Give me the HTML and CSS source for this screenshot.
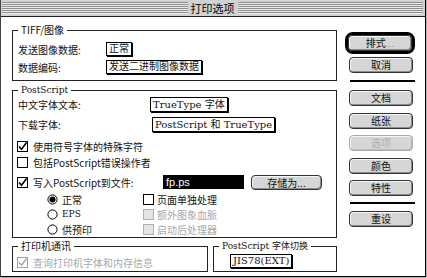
FILE: index.html
```html
<!DOCTYPE html>
<html lang="zh-CN">
<head>
<meta charset="utf-8">
<title>打印选项</title>
<link rel="stylesheet" href="styles.css">
</head>
<body>
<div class="dialog">
  <div class="titlebar"><div class="stripes"><span class="title">打印选项</span></div></div>
  <div class="body">
    <div class="left">
      <fieldset class="group tiff">
        <legend>TIFF/图像</legend>
        <div class="row r1"><span class="lbl w88">发送图像数据:</span><span class="popup">正常</span></div>
        <div class="row r2"><span class="lbl w88">数据编码:</span><span class="popup">发送二进制图像数据</span></div>
      </fieldset>
      <fieldset class="group ps">
        <legend class="serif">PostScript</legend>
        <div class="row ra"><span class="lbl w132">中文字体文本:</span><span class="popup tall">TrueType 字体</span></div>
        <div class="row rb"><span class="lbl w134">下载字体:</span><span class="popup tall">PostScript 和 TrueType</span></div>
        <div class="row check c1">
          <svg class="box" width="11" height="11" viewBox="0 0 11 11"><rect x="0.5" y="0.5" width="10" height="10" fill="#fff" stroke="#000"/><path d="M2 5.5 L4.5 8.2 L9.6 1.6" fill="none" stroke="#000" stroke-width="1.6"/></svg>
          <span>使用符号字体的特殊字符</span>
        </div>
        <div class="row check c2">
          <svg class="box" width="11" height="11" viewBox="0 0 11 11"><rect x="0.5" y="0.5" width="10" height="10" fill="#fff" stroke="#000"/></svg>
          <span>包括PostScript错误操作者</span>
        </div>
        <div class="row check c3">
          <svg class="box" width="11" height="11" viewBox="0 0 11 11"><rect x="0.5" y="0.5" width="10" height="10" fill="#fff" stroke="#000"/><path d="M2 5.5 L4.5 8.2 L9.6 1.6" fill="none" stroke="#000" stroke-width="1.6"/></svg>
          <span class="lbl w125">写入PostScript到文件:</span>
          <span class="field">fp.ps</span>
          <span class="btn save">存储为...</span>
        </div>
        <div class="opts">
          <div class="opt">
            <svg width="11" height="11" viewBox="0 0 11 11"><circle cx="5.5" cy="5.5" r="4.6" fill="#fff" stroke="#000"/><circle cx="5.5" cy="5.5" r="3" fill="#000"/></svg>
            <span>正常</span>
          </div>
          <div class="opt o2">
            <svg width="11" height="11" viewBox="0 0 11 11"><rect x="0.5" y="0.5" width="10" height="10" fill="#fff" stroke="#000"/></svg>
            <span>页面单独处理</span>
          </div>
          <div class="opt">
            <svg width="11" height="11" viewBox="0 0 11 11"><circle cx="5.5" cy="5.5" r="4.6" fill="#fff" stroke="#000"/></svg>
            <span class="serif">EPS</span>
          </div>
          <div class="opt o2 off">
            <svg width="11" height="11" viewBox="0 0 11 11"><rect x="0.5" y="0.5" width="10" height="10" fill="#e4e4e4" stroke="#b0b0b0"/></svg>
            <span>额外图象血脈</span>
          </div>
          <div class="opt">
            <svg width="11" height="11" viewBox="0 0 11 11"><circle cx="5.5" cy="5.5" r="4.6" fill="#fff" stroke="#000"/></svg>
            <span>供预印</span>
          </div>
          <div class="opt o2 off">
            <svg width="11" height="11" viewBox="0 0 11 11"><rect x="0.5" y="0.5" width="10" height="10" fill="#e4e4e4" stroke="#b0b0b0"/></svg>
            <span>启动后处理器</span>
          </div>
        </div>
      </fieldset>
      <div class="bottom">
        <fieldset class="group comm">
          <legend>打印机通讯</legend>
          <div class="row check off qc">
            <svg class="box" width="11" height="11" viewBox="0 0 11 11"><rect x="0.5" y="0.5" width="10" height="10" fill="#fff" stroke="#a0a0a0"/><path d="M2 5.5 L4.5 8.2 L9.6 1.6" fill="none" stroke="#a0a0a0" stroke-width="1.4"/></svg>
            <span>查询打印机字体和内存信息</span>
          </div>
        </fieldset>
        <fieldset class="group sw">
          <legend class="serif">PostScript 字体切换</legend>
          <div class="row jr"><span class="popup">JIS78(EXT)</span></div>
        </fieldset>
      </div>
    </div>
    <div class="right">
      <div class="ring"><div class="btn">排式<span class="dim">...</span></div></div>
      <div class="btn b-cancel">取消</div>
      <div class="sep s1"></div>
      <div class="btn b-doc">文档</div>
      <div class="btn b-next">纸张</div>
      <div class="btn b-next disabled">选项</div>
      <div class="btn b-next">颜色</div>
      <div class="btn b-next">特性</div>
      <div class="sep s2"></div>
      <div class="btn b-reset">重设</div>
    </div>
  </div>
</div>
</body>
</html>
```

FILE: styles.css
```css
* { box-sizing: border-box; }
html, body { margin: 0; padding: 0; background: #b4b4b4; }
body {
  font-family: "Noto Sans CJK SC", "Noto Sans", sans-serif;
  font-size: 10px;
  color: #111;
}
.dialog {
  width: 426px;
  height: 277px;
  background: #fff;
  border-left: 1px solid #444;
  border-right: 1px solid #000;
  border-bottom: 1px solid #000;
  display: flex;
  flex-direction: column;
}
.titlebar {
  height: 17px;
  background: #d2d2d2;
  border-bottom: 1px solid #222;
  padding: 2px 2px 2px 1px;
}
.stripes {
  height: 12px;
  background: repeating-linear-gradient(to bottom, #8e8e8e 0 1px, #ececec 1px 2px);
  display: flex;
  justify-content: center;
}
.title {
  background: #d2d2d2;
  padding: 0 3px;
  font-size: 11px;
  line-height: 12px;
  color: #000;
}
.body {
  display: flex;
  padding: 7px 0 0 11px;
}
.left { width: 325px; }
.right {
  width: 70px;
  margin-left: 8px;
  display: flex;
  flex-direction: column;
  align-items: flex-start;
}
.serif { font-family: "DejaVu Serif", "Noto Sans CJK SC", serif; font-size: 9px; }
.group {
  margin: 0;
  border: 1px solid #222;
  padding: 0 5px;
  min-width: 0;
}
.group legend {
  padding: 0 3px;
  line-height: 12px;
  height: 12px;
}
.row { display: flex; align-items: center; height: 14px; }
.lbl { display: inline-block; white-space: nowrap; }
.w88 { width: 88px; }
.w132 { width: 132px; }
.w134 { width: 134px; }
.w125 { width: 125px; }
.popup {
  font-family: "DejaVu Serif", "Noto Sans CJK SC", serif;
  font-size: 10px;
  border: 1px solid #000;
  box-shadow: 1px 1px 0 #000;
  height: 14px;
  line-height: 12px;
  padding: 0 2px;
  white-space: nowrap;
  background: #fff;
}
.popup.tall { height: 15px; line-height: 13px; }
.tiff { padding-bottom: 6px; }
.tiff .r1 { margin-top: 6px; }
.tiff .r2 { margin-top: 4px; }
.ps { margin-top: 3px; padding-bottom: 1px; }
.ps .ra { margin-top: 1px; height: 15px; }
.ps .rb { margin-top: 5px; height: 15px; }
.check { gap: 5px; }
.check .box { margin-left: -1px; flex: none; }
.c1 { margin-top: 7px; }
.c2 { margin-top: 2px; }
.c3 { margin-top: 6px; gap: 5px; }
.field {
  width: 81px;
  height: 14px;
  background: #000;
  color: #fff;
  line-height: 14px;
  padding-left: 3px;
  font-family: "Liberation Sans", sans-serif;
  font-size: 11px;
}
.btn {
  width: 64px;
  height: 16px;
  border: 1px solid #333;
  border-radius: 4px;
  background: #d6d6d6;
  box-shadow: inset -1px -1px 0 #8c8c8c, inset 1px 1px 0 #f6f6f6;
  text-align: center;
  line-height: 14px;
  font-size: 10px;
  color: #111;
}
.btn.save { width: 71px; height: 15px; line-height: 13px; margin-left: 2px; }
.opts {
  display: grid;
  grid-template-columns: 96px auto;
  row-gap: 1px;
  margin: 3px 0 0 29px;
}
.opt { display: flex; align-items: center; gap: 4px; height: 14px; }
.opt.o2 { gap: 3px; }
.off { color: #a8a8a8; }
.bottom {
  display: flex;
  gap: 5px;
  margin-top: 2px;
}
.comm { width: 196px; padding-bottom: 2px; }
.comm .qc { margin-top: 3px; }
.sw { flex: 1; }
.sw .jr { margin-top: 2px; padding-left: 11px; }
.ring {
  margin-top: 8px;
  width: 70px;
  height: 22px;
  border: 3px solid #000;
  border-radius: 8px;
}
.dim { color: #999; }
.b-cancel { margin: 3px 0 0 4px; }
.sep { width: 65px; height: 2px; background: #000; margin-left: 5px; }
.s1 { margin-top: 7px; }
.b-doc { margin: 8px 0 0 4px; }
.b-next { margin: 6.5px 0 0 4px; }
.s2 { margin-top: 6px; }
.b-reset { margin: 7px 0 0 4px; }
.btn.disabled { border-color: #aaa; color: #b0b0b0; box-shadow: inset -1px -1px 0 #bdbdbd, inset 1px 1px 0 #f6f6f6; }
```
